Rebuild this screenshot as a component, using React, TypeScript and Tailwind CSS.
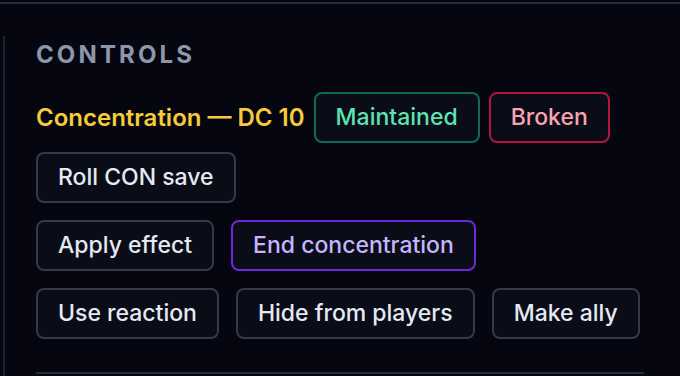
import React from "react";

type Tone = "neutral" | "good" | "bad" | "violet";

const toneClasses: Record<Tone, string> = {
  neutral: "border-[#323a4b] text-[#e5e9f2]",
  good: "border-[#0f6b55] text-[#5fe3b2]",
  bad: "border-[#b3143f] text-[#f9a3b2]",
  violet: "border-[#6d28d9] text-[#c4b5fd]",
};

function Btn({ label, tone = "neutral" }: { label: string; tone?: Tone }) {
  return (
    <button
      className={
        "h-[51px] px-[20px] rounded-[8px] border-2 bg-[#0a0c18] text-[23px] font-medium leading-none whitespace-nowrap " +
        toneClasses[tone]
      }
    >
      {label}
    </button>
  );
}

export default function App() {
  return (
    <div
      className="w-[680px] h-[376px] overflow-hidden bg-[#05060f]"
      style={{ fontFamily: "Inter, 'Noto Sans', sans-serif" }}
    >
      <div className="mt-[2px] h-[2px] bg-[#262b3a]" />
      <div className="mt-[32px] ml-[3px] border-l-2 border-[#1d2231] pl-[31px] pr-[36px] h-[400px]">
        <h2 className="pt-[5px] text-[24px] leading-[28px] font-bold tracking-[0.13em] text-[#8b97ab]">
          CONTROLS
        </h2>
        <div className="mt-[23px] flex flex-wrap items-center gap-[9px]">
          <span className="text-[24px] font-semibold text-[#f6cb3a]">
            Concentration — DC 10
          </span>
          <Btn label="Maintained" tone="good" />
          <Btn label="Broken" tone="bad" />
          <Btn label="Roll CON save" />
        </div>
        <div className="mt-[17px] flex flex-wrap gap-x-[17px] gap-y-[17px]">
          <Btn label="Apply effect" />
          <Btn label="End concentration" tone="violet" />
          <Btn label="Use reaction" />
          <Btn label="Hide from players" />
          <Btn label="Make ally" />
        </div>
        <div className="mt-[33px] h-[2px] bg-[#262b3a]" />
      </div>
    </div>
  );
}
